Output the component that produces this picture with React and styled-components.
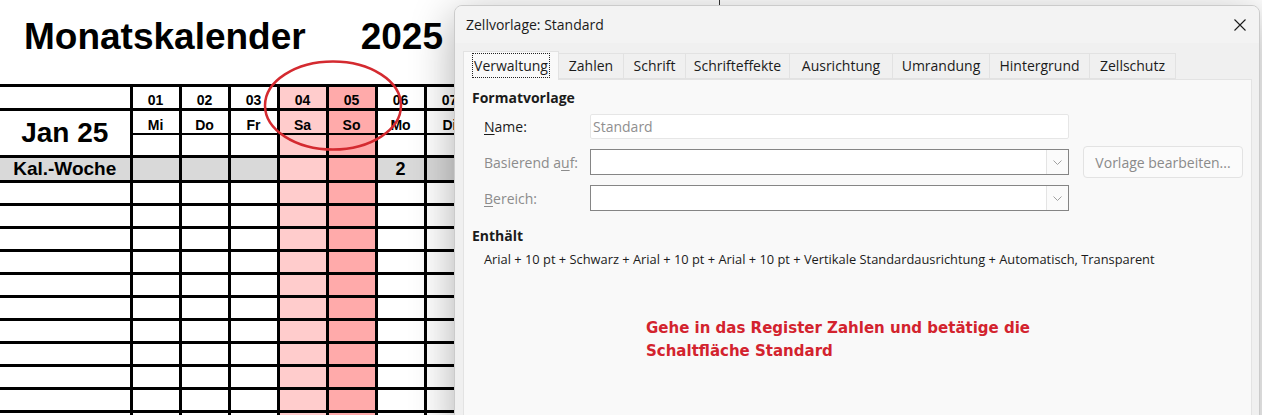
import React from 'react';
import styled, { createGlobalStyle } from 'styled-components';

const GlobalStyle = createGlobalStyle`
  html, body { margin: 0; padding: 0; background: #fff; overflow: hidden; }
  #root { width: 1262px; height: 415px; }
`;

const Page = styled.div`
  position: relative;
  width: 1262px;
  height: 415px;
  overflow: hidden;
  background: #fff;
  font-family: "Liberation Sans", Arial, sans-serif;
  color: #000;
`;

const Sheet = styled.div`
  display: flex;
  flex-direction: column;
`;

const TitleRow = styled.div`
  display: flex;
  align-items: flex-start;
  height: 84px;
  box-sizing: border-box;
  padding: 16px 0 0 24px;
  font-weight: 700;
  font-size: 37px;
  line-height: 41px;
`;

const Year = styled.span`
  margin-left: 55px;
`;

const Tick = styled.span`
  width: 1px;
  height: 6px;
  margin: -16px 0 0 276px;
  background: #333;
`;

const Grid = styled.table`
  border-collapse: collapse;
  table-layout: fixed;
  width: ${131 + 49 * 12}px;
`;

const Col = styled.col`
  width: ${(p) => p.$w}px;
`;

const Row = styled.tr`
  height: ${(p) => p.$h}px;
`;

const Cell = styled.td`
  border: 3px solid #000;
  border-left-width: ${(p) => (p.$first ? 0 : 3)}px;
  border-top-width: ${(p) => p.$top ?? 3}px;
  border-bottom-width: ${(p) => p.$bottom ?? 3}px;
  padding: 0 0 ${(p) => p.$pb ?? 1}px;
  text-align: center;
  vertical-align: ${(p) => p.$valign || 'bottom'};
  font-weight: 700;
  font-size: ${(p) => p.$fs || 14}px;
  line-height: 1;
  white-space: nowrap;
  overflow: hidden;
  background: ${(p) => p.$bg || '#fff'};
`;

const Ring = styled.svg`
  position: absolute;
  left: 260px;
  top: 57px;
  width: 150px;
  height: 100px;
  pointer-events: none;
`;

/* ---------- dialog ---------- */

const Dialog = styled.section`
  position: absolute;
  left: 454px;
  top: 5px;
  width: 806px;
  height: 440px;
  box-sizing: border-box;
  border: 1px solid #cbcbcb;
  border-radius: 8px;
  background: #f0f0f0;
  box-shadow: 0 10px 44px rgba(0, 0, 0, 0.32);
  font-family: "Open Sans", "Noto Sans", sans-serif;
  font-size: 14px;
  color: #1b1b1b;
  display: flex;
  flex-direction: column;
  overflow: hidden;
`;

const TitleBar = styled.header`
  height: 37px;
  flex: none;
  display: flex;
  align-items: center;
  justify-content: space-between;
  padding: 0 12px 0 11px;
  background: #f3f3f3;
`;

const CloseBtn = styled.span`
  display: flex;
  width: 14px;
  height: 14px;
`;

const Body = styled.div`
  flex: 1;
  display: flex;
  flex-direction: column;
  padding: 8px 7px 0 8px;
`;

const Tabs = styled.div`
  display: flex;
  align-items: flex-end;
  height: 28px;
`;

const Tab = styled.div`
  position: relative;
  width: ${(p) => p.$w + 1}px;
  height: ${(p) => (p.$active ? 29 : 26)}px;
  box-sizing: border-box;
  display: flex;
  align-items: center;
  justify-content: center;
  padding-bottom: 1px;
  margin-left: -1px;
  margin-bottom: ${(p) => (p.$active ? -1 : 0)}px;
  border: 1px solid #e2e2e2;
  border-bottom: ${(p) => (p.$active ? 'none' : '1px solid #e2e2e2')};
  background: ${(p) => (p.$active ? '#f9f9f9' : '#f0f0f0')};
  white-space: nowrap;
  z-index: ${(p) => (p.$active ? 2 : 1)};
  &:first-child { margin-left: 0; }
`;

const Focus = styled.span`
  outline: 1px dotted #222;
  outline-offset: 0;
  padding: 2px 1px;
  line-height: 19px;
`;

const Panel = styled.div`
  flex: 1;
  background: #f9f9f9;
  border: 1px solid #e3e3e3;
  padding: 8px 8px;
  display: flex;
  flex-direction: column;
`;

const SectionHead = styled.div`
  font-weight: 700;
  line-height: 19px;
  margin-top: ${(p) => p.$mt || 0}px;
`;

const Form = styled.div`
  display: grid;
  grid-template-columns: 106px 479px 174px;
  grid-template-rows: 25px 26px 26px;
  row-gap: 10px;
  padding-left: 12px;
  margin-top: 7px;
  align-items: center;
`;

const Label = styled.label`
  color: ${(p) => (p.$disabled ? '#8c8c8c' : '#1b1b1b')};
  line-height: 19px;
  & u { text-underline-offset: 2px; }
`;

const Input = styled.div`
  height: 25px;
  box-sizing: border-box;
  background: #fff;
  border: 1px solid #e6e6e6;
  border-radius: 2px;
  display: flex;
  align-items: center;
  padding-left: 2px;
  color: #8f8f8f;
`;

const Combo = styled.div`
  height: 26px;
  box-sizing: border-box;
  background: #fff;
  border: 1px solid #858585;
  display: flex;
  justify-content: flex-end;
`;

const DropBtn = styled.span`
  width: 21px;
  border-left: 1px solid #e4e4e4;
  background: #fbfbfb;
  display: flex;
  align-items: center;
  justify-content: center;
`;

const Button = styled.div`
  height: 32px;
  margin-left: 14px;
  box-sizing: border-box;
  border: 1px solid #e3e3e3;
  border-radius: 4px;
  background: #fbfbfb;
  color: #8a8a8a;
  display: flex;
  align-items: center;
  justify-content: center;
  & u { text-underline-offset: 2px; }
`;

const Contents = styled.div`
  padding-left: 12px;
  margin-top: 5px;
  font-size: 12.85px;
  line-height: 18px;
  white-space: nowrap;
`;

const Note = styled.div`
  margin: 49px 0 0 174px;
  color: #d3232e;
  font-family: "DejaVu Sans", Verdana, sans-serif;
  font-weight: 700;
  font-size: 15px;
  line-height: 23px;
`;

const days = [
  ['01', 'Mi'], ['02', 'Do'], ['03', 'Fr'], ['04', 'Sa'], ['05', 'So'], ['06', 'Mo'],
  ['07', 'Di'], ['08', 'Mi'], ['09', 'Do'], ['10', 'Fr'], ['11', 'Sa'], ['12', 'So'],
];

const weekendBg = (i) => (i === 3 || i === 10 ? '#ffcccc' : i === 4 || i === 11 ? '#ffaaaa' : null);

const Chevron = () => (
  <svg width="9" height="5" viewBox="0 0 9 5">
    <path d="M0.5 0.5 L4.5 4.5 L8.5 0.5" fill="none" stroke="#a0a0a0" strokeWidth="1" />
  </svg>
);

const tabs = [
  ['Verwaltung', 95], ['Zahlen', 65], ['Schrift', 62], ['Schrifteffekte', 104],
  ['Ausrichtung', 103], ['Umrandung', 97], ['Hintergrund', 100], ['Zellschutz', 86],
];

export default function App() {
  const dataRows = Array.from({ length: 11 });
  return (
    <Page>
      <GlobalStyle />
      <Sheet>
        <TitleRow>
          <span>Monatskalender</span>
          <Year>2025</Year>
          <Tick />
        </TitleRow>
        <Grid>
          <colgroup>
            <Col $w={131} />
            {days.map((d) => (
              <Col key={d[0]} $w={49} />
            ))}
          </colgroup>
          <tbody>
            <Row $h={24}>
              <Cell $first />
              {days.map((d, i) => (
                <Cell key={d[0]} $bg={weekendBg(i)}>{d[0]}</Cell>
              ))}
            </Row>
            <Row $h={24}>
              <Cell $first rowSpan={2} $valign="middle" $fs={28} $pb={0}>Jan 25</Cell>
              {days.map((d, i) => (
                <Cell key={d[0]} $bg={weekendBg(i)} $bottom={2}>{d[1]}</Cell>
              ))}
            </Row>
            <Row $h={23}>
              {days.map((d, i) => (
                <Cell key={d[0]} $bg={weekendBg(i)} $top={2} />
              ))}
            </Row>
            <Row $h={25}>
              <Cell $first $bg="#d9d9d9" $fs={19} $pb={2}>Kal.-Woche</Cell>
              {days.map((d, i) => (
                <Cell key={d[0]} $bg={weekendBg(i) || '#d9d9d9'} $fs={18} $pb={2}>
                  {d[0] === '06' ? '2' : ''}
                </Cell>
              ))}
            </Row>
            {dataRows.map((_, r) => (
              <Row key={r} $h={23}>
                <Cell $first />
                {days.map((d, i) => (
                  <Cell key={d[0]} $bg={weekendBg(i)} />
                ))}
              </Row>
            ))}
          </tbody>
        </Grid>
      </Sheet>

      <Ring viewBox="0 0 150 100">
        <ellipse cx="73" cy="48.5" rx="68" ry="44" fill="none" stroke="#d42a30" strokeWidth="2.5" />
      </Ring>

      <Dialog>
        <TitleBar>
          <span>Zellvorlage: Standard</span>
          <CloseBtn>
            <svg width="14" height="14" viewBox="0 0 14 14">
              <path d="M1.5 1.5 L12.5 12.5 M12.5 1.5 L1.5 12.5" stroke="#1b1b1b" strokeWidth="1.1" fill="none" />
            </svg>
          </CloseBtn>
        </TitleBar>
        <Body>
          <Tabs>
            {tabs.map(([t, w], i) => (
              <Tab key={t} $w={w} $active={i === 0}>
                {i === 0 ? <Focus>{t}</Focus> : t}
              </Tab>
            ))}
          </Tabs>
          <Panel>
            <SectionHead>Formatvorlage</SectionHead>
            <Form>
              <Label><u>N</u>ame:</Label>
              <Input>Standard</Input>
              <span />
              <Label $disabled>Basierend a<u>u</u>f:</Label>
              <Combo><DropBtn><Chevron /></DropBtn></Combo>
              <Button>Vorla<u>g</u>e bearbeiten...</Button>
              <Label $disabled><u>B</u>ereich:</Label>
              <Combo><DropBtn><Chevron /></DropBtn></Combo>
              <span />
            </Form>
            <SectionHead $mt={15}>Enthält</SectionHead>
            <Contents>
              Arial + 10 pt + Schwarz + Arial + 10 pt + Arial + 10 pt + Vertikale Standardausrichtung + Automatisch, Transparent
            </Contents>
            <Note>
              Gehe in das Register Zahlen und betätige die
              <br />
              Schaltfläche Standard
            </Note>
          </Panel>
        </Body>
      </Dialog>
    </Page>
  );
}
